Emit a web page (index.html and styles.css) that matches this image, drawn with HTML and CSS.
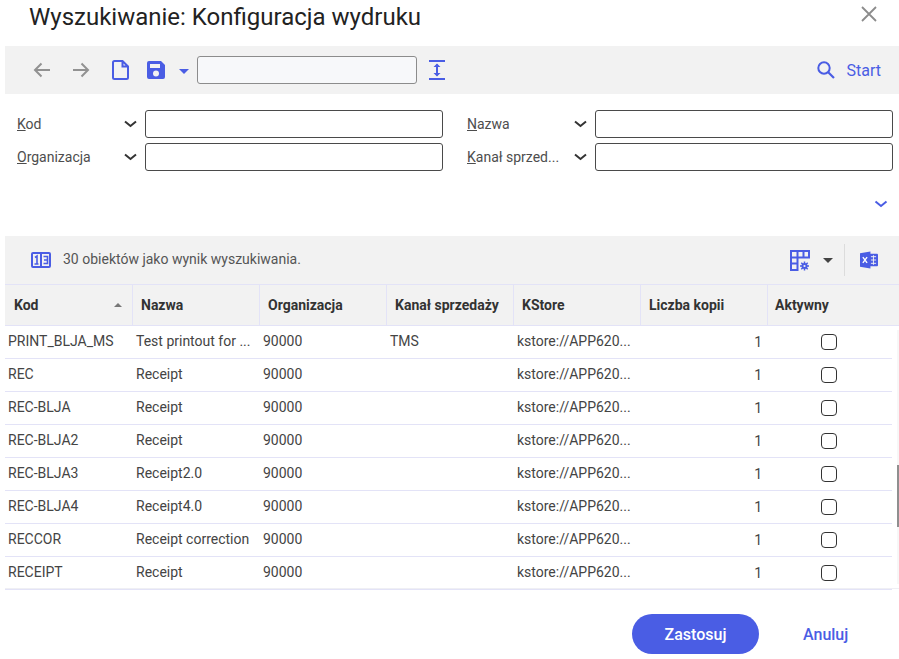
FILE: index.html
```html
<!DOCTYPE html>
<html lang="pl">
<head>
    <meta charset="UTF-8">
    <title>Wyszukiwanie: Konfiguracja wydruku</title>
    <link rel="stylesheet" href="styles.css">
</head>
<body>

<div class="dialog">
    <div class="title-bar">
        <h1>Wyszukiwanie: Konfiguracja wydruku</h1>
        <svg class="close" width="16" height="16" viewBox="0 0 16 16"><path d="M1 1L15 15M15 1L1 15" stroke="#8c8c8c" stroke-width="1.8" fill="none"/></svg>
    </div>

    <div class="toolbar">
        <svg class="tool-arrow" width="18" height="16" viewBox="0 0 18 16"><path d="M17 8H2M8.500 1.500L2 8l6.500 6.500" stroke="#929292" stroke-width="2" fill="none"/></svg>
        <svg class="tool-arrow second" width="18" height="16" viewBox="0 0 18 16"><path d="M1 8h15M9.500 1.500L16 8l-6.500 6.500" stroke="#929292" stroke-width="2" fill="none"/></svg>
        <svg class="tool-new" width="17" height="20" viewBox="0 0 17 20"><path d="M2.500 1H10.500L16 6.500V17.500a1.500 1.500 0 0 1-1.500 1.500H2.500A1.500 1.500 0 0 1 1 17.500V2.500A1.500 1.500 0 0 1 2.500 1ZM10.500 1V6.500H16" stroke="#4a5de4" stroke-width="2" fill="none"/></svg>
        <svg class="tool-save" width="18" height="18" viewBox="0 0 18 18"><path fill-rule="evenodd" d="M2 0H14L18 4V16a2 2 0 0 1-2 2H2a2 2 0 0 1-2-2V2a2 2 0 0 1 2-2ZM3 3V7H13V3ZM9 9.500a3 3 0 1 0 0 6a3 3 0 1 0 0-6Z" fill="#4a5de4"/></svg>
        <span class="caret"></span>
        <input class="tool-input" type="text">
        <svg class="tool-fit" width="16" height="20" viewBox="0 0 16 20"><path d="M0 1H16M0 19H16" stroke="#4a5de4" stroke-width="2"/><path d="M8 4.500V15.500" stroke="#4a5de4" stroke-width="2"/><path d="M4.500 7L8 3.500L11.500 7ZM4.500 13L8 16.500L11.500 13Z" fill="#4a5de4"/></svg>
        <div class="start">
            <svg width="18" height="18" viewBox="0 0 18 18"><circle cx="7" cy="7" r="5.700" stroke="#4a5de4" stroke-width="2" fill="none"/><path d="M11 11L17 17" stroke="#4a5de4" stroke-width="2.200"/></svg>
            <span>Start</span>
        </div>
    </div>

    <div class="filters">
        <div class="filter">
            <label><u>K</u>od</label>
            <svg class="chev" width="13" height="8" viewBox="0 0 13 8"><path d="M1 1.500L6.500 6L12 1.500" stroke="#333" stroke-width="2" fill="none"/></svg>
            <input type="text">
        </div>
        <div class="filter">
            <label><u>N</u>azwa</label>
            <svg class="chev" width="13" height="8" viewBox="0 0 13 8"><path d="M1 1.500L6.500 6L12 1.500" stroke="#333" stroke-width="2" fill="none"/></svg>
            <input type="text">
        </div>
        <div class="filter">
            <label><u>O</u>rganizacja</label>
            <svg class="chev" width="13" height="8" viewBox="0 0 13 8"><path d="M1 1.500L6.500 6L12 1.500" stroke="#333" stroke-width="2" fill="none"/></svg>
            <input type="text">
        </div>
        <div class="filter">
            <label><u>K</u>anał sprzed...</label>
            <svg class="chev" width="13" height="8" viewBox="0 0 13 8"><path d="M1 1.500L6.500 6L12 1.500" stroke="#333" stroke-width="2" fill="none"/></svg>
            <input type="text">
        </div>
    </div>

    <div class="expand">
        <svg width="14" height="8" viewBox="0 0 14 8"><path d="M1.500 1.500L7 6L12.500 1.500" stroke="#4a5de4" stroke-width="2" fill="none"/></svg>
    </div>

    <div class="status">
        <svg class="status-icon" width="20" height="16" viewBox="0 0 20 16"><rect x="1" y="1" width="18" height="14" rx="1" stroke="#4a5de4" stroke-width="2" fill="none"/><path d="M10 1V15" stroke="#4a5de4" stroke-width="2"/><path d="M4 5.500L6 4V12M3.500 12H7.500" stroke="#4a5de4" stroke-width="1.600" fill="none"/><path d="M12.500 4.500H16.500V8H13M16.500 8V11.500H12.500" stroke="#4a5de4" stroke-width="1.600" fill="none"/></svg>
        <span class="status-text">30 obiektów jako wynik wyszukiwania.</span>
        <svg class="grid-icon" width="20" height="21" viewBox="0 0 20 21"><path d="M1 1H19V7.500H1ZM1 7.500H7.500V20H1ZM1 13.500H7.500M7.500 1V7.500M13.500 1V7.500" stroke="#4a5de4" stroke-width="2" fill="none"/><path d="M14.500 11.500V20.500M10 16H19M11.300 12.800L17.700 19.200M17.700 12.800L11.300 19.200" stroke="#4a5de4" stroke-width="1.500"/><circle cx="14.500" cy="16" r="3" fill="#4a5de4"/><circle cx="14.500" cy="16" r="1.100" fill="#f2f2f2"/></svg>
        <span class="caret dark"></span>
        <span class="divider"></span>
        <svg class="excel-icon" width="18" height="18" viewBox="0 0 19 18"><path d="M7 2.500H18a1 1 0 0 1 1 1V14.500a1 1 0 0 1-1 1H7Z" fill="#4a5de4"/><path d="M11.500 5.500H17M11.500 9H17M11.500 12.500H17M14.200 4V14" stroke="#f2f2f2" stroke-width="1"/><path d="M0 2L11 0V18L0 16Z" fill="#4a5de4"/><path d="M3 6L7.500 12M7.500 6L3 12" stroke="#fff" stroke-width="1.500"/></svg>
    </div>

    <div class="grid">
        <div class="grid-head">
            <div class="head-cell">Kod<span class="sort"></span></div>
            <div class="head-cell">Nazwa</div>
            <div class="head-cell">Organizacja</div>
            <div class="head-cell">Kanał sprzedaży</div>
            <div class="head-cell">KStore</div>
            <div class="head-cell">Liczba kopii</div>
            <div class="head-cell">Aktywny</div>
        </div>
        <div class="grid-body">
            <div class="rows">
                <div class="row"><span>PRINT_BLJA_MS</span><span>Test printout for ...</span><span>90000</span><span>TMS</span><span>kstore://APP620...</span><span class="num">1</span><span class="check"><i></i></span></div>
                <div class="row"><span>REC</span><span>Receipt</span><span>90000</span><span></span><span>kstore://APP620...</span><span class="num">1</span><span class="check"><i></i></span></div>
                <div class="row"><span>REC-BLJA</span><span>Receipt</span><span>90000</span><span></span><span>kstore://APP620...</span><span class="num">1</span><span class="check"><i></i></span></div>
                <div class="row"><span>REC-BLJA2</span><span>Receipt</span><span>90000</span><span></span><span>kstore://APP620...</span><span class="num">1</span><span class="check"><i></i></span></div>
                <div class="row"><span>REC-BLJA3</span><span>Receipt2.0</span><span>90000</span><span></span><span>kstore://APP620...</span><span class="num">1</span><span class="check"><i></i></span></div>
                <div class="row"><span>REC-BLJA4</span><span>Receipt4.0</span><span>90000</span><span></span><span>kstore://APP620...</span><span class="num">1</span><span class="check"><i></i></span></div>
                <div class="row"><span>RECCOR</span><span>Receipt correction</span><span>90000</span><span></span><span>kstore://APP620...</span><span class="num">1</span><span class="check"><i></i></span></div>
                <div class="row"><span>RECEIPT</span><span>Receipt</span><span>90000</span><span></span><span>kstore://APP620...</span><span class="num">1</span><span class="check"><i></i></span></div>
            </div>
            <div class="scroll-track"><div class="scroll-thumb"></div></div>
        </div>
    </div>

    <div class="footer">
        <button class="btn-apply">Zastosuj</button>
        <button class="btn-cancel">Anuluj</button>
    </div>
</div>

</body>
</html>
```

FILE: styles.css
```css
* {
    box-sizing: border-box;
}

html, body {
    margin: 0;
    height: 100%;
    overflow: hidden;
}

body {
    font-family: Roboto, "Liberation Sans", sans-serif;
    font-size: 14px;
    color: #333;
    background-color: #fff;
}

.dialog {
    width: 899px;
    height: 659px;
    padding-left: 5px;
}

.title-bar {
    height: 46px;
    display: flex;
    justify-content: space-between;
    align-items: flex-start;
}

.title-bar h1 {
    margin: 2px 0 0 24px;
    font-size: 24px;
    line-height: 30px;
    font-weight: 400;
    color: #222;
}

.close {
    margin: 6px 22px 0 0;
}

.toolbar {
    height: 48px;
    background-color: #f2f2f2;
    display: flex;
    align-items: center;
    padding-left: 28px;
}

.tool-arrow.second {
    margin-left: 21px;
}

.tool-new {
    margin-left: 22px;
}

.tool-save {
    margin-left: 18px;
}

.caret {
    width: 0;
    height: 0;
    margin-left: 14px;
    margin-top: 2px;
    border-left: 5.5px solid transparent;
    border-right: 5.5px solid transparent;
    border-top: 5px solid #4a5de4;
}

.caret.dark {
    margin-left: 13px;
    margin-top: 0;
    border-top-color: #444;
}

.tool-input {
    width: 220px;
    height: 28px;
    margin-left: 8px;
    background-color: #f7f8fa;
    border: 1px solid #8c8c8c;
    border-radius: 3px;
}

.tool-fit {
    margin-left: 12px;
}

.start {
    margin-left: auto;
    margin-right: 18px;
    display: flex;
    align-items: center;
    gap: 12px;
    font-size: 16px;
    color: #4a5de4;
}

.filters {
    display: grid;
    grid-template-columns: 426px 426px;
    column-gap: 24px;
    row-gap: 5px;
    padding: 16px 0 0 12px;
}

.filter {
    display: flex;
    align-items: center;
    height: 28px;
}

.filter label {
    width: 107px;
    white-space: nowrap;
    color: #4d4d4d;
}

.filter input {
    flex: 1;
    height: 28px;
    margin-left: 8px;
    background-color: #fff;
    border: 1px solid #4a4a4a;
    border-radius: 3px;
}

.expand {
    height: 65px;
    padding: 24px 11px 0 0;
    text-align: right;
}

.status {
    height: 48px;
    background-color: #f2f2f2;
    display: flex;
    align-items: center;
    padding-left: 26px;
}

.status-text {
    margin: -2px 0 0 12px;
    color: #555;
}

.grid-icon {
    margin-left: auto;
}

.divider {
    width: 1px;
    height: 32px;
    margin-left: 11px;
    background-color: #dcdcdc;
}

.excel-icon {
    margin: 0 21px 0 15px;
}

.grid-head {
    display: grid;
    grid-template-columns: repeat(6, 127px) 1fr;
    height: 42px;
    background-color: #f2f2f2;
    border-top: 1px solid #e3e3f7;
    border-bottom: 1px solid #e3e3f7;
}

.head-cell {
    display: flex;
    align-items: center;
    padding-left: 8px;
    border-left: 1px solid #e3e3f7;
    font-weight: 700;
    color: #333;
}

.head-cell:first-child {
    padding-left: 9px;
    border-left: none;
    justify-content: space-between;
}

.head-cell:last-child {
    padding-left: 7px;
}

.sort {
    width: 0;
    height: 0;
    margin-right: 10px;
    border-left: 4px solid transparent;
    border-right: 4px solid transparent;
    border-top: none;
    border-bottom: 4px solid #777;
}

.grid-body {
    display: flex;
    height: 263px;
    border-bottom: 1px solid #efeff4;
}

.rows {
    width: 887px;
}

.row {
    display: grid;
    grid-template-columns: repeat(6, 127px) 1fr;
    height: 33px;
    align-items: center;
    border-bottom: 1px solid #e3e3f7;
    color: #444;
    line-height: 30px;
}

.row span {
    padding: 0 0 2px 4px;
    white-space: nowrap;
    overflow: hidden;
}

.row span:first-child {
    padding-left: 3px;
}

.row .num {
    padding: 0 5px 0 0;
    text-align: right;
}

.row .check {
    display: flex;
    justify-content: center;
    padding: 0;
    margin-left: -2px;
}

.check i {
    width: 16px;
    height: 16px;
    border: 1px solid #333;
    border-radius: 4px;
}

.scroll-track {
    position: relative;
    width: 7px;
    margin-top: 4px;
    margin-bottom: 4px;
    border-right: 2px solid #f7f7f7;
}

.scroll-thumb {
    position: absolute;
    top: 135px;
    right: -2px;
    width: 2px;
    height: 62px;
    background-color: #8f8f8f;
}

.footer {
    display: flex;
    align-items: center;
    padding: 25px 0 0 627px;
}

.btn-apply {
    width: 127px;
    height: 40px;
    border: none;
    border-radius: 20px;
    background-color: #4a5de4;
    color: #fff;
    font-family: inherit;
    font-size: 16px;
    font-weight: 500;
}

.btn-cancel {
    margin-left: 44px;
    padding: 0;
    border: none;
    background: none;
    color: #4a5de4;
    font-family: inherit;
    font-size: 16px;
    font-weight: 500;
}
```
